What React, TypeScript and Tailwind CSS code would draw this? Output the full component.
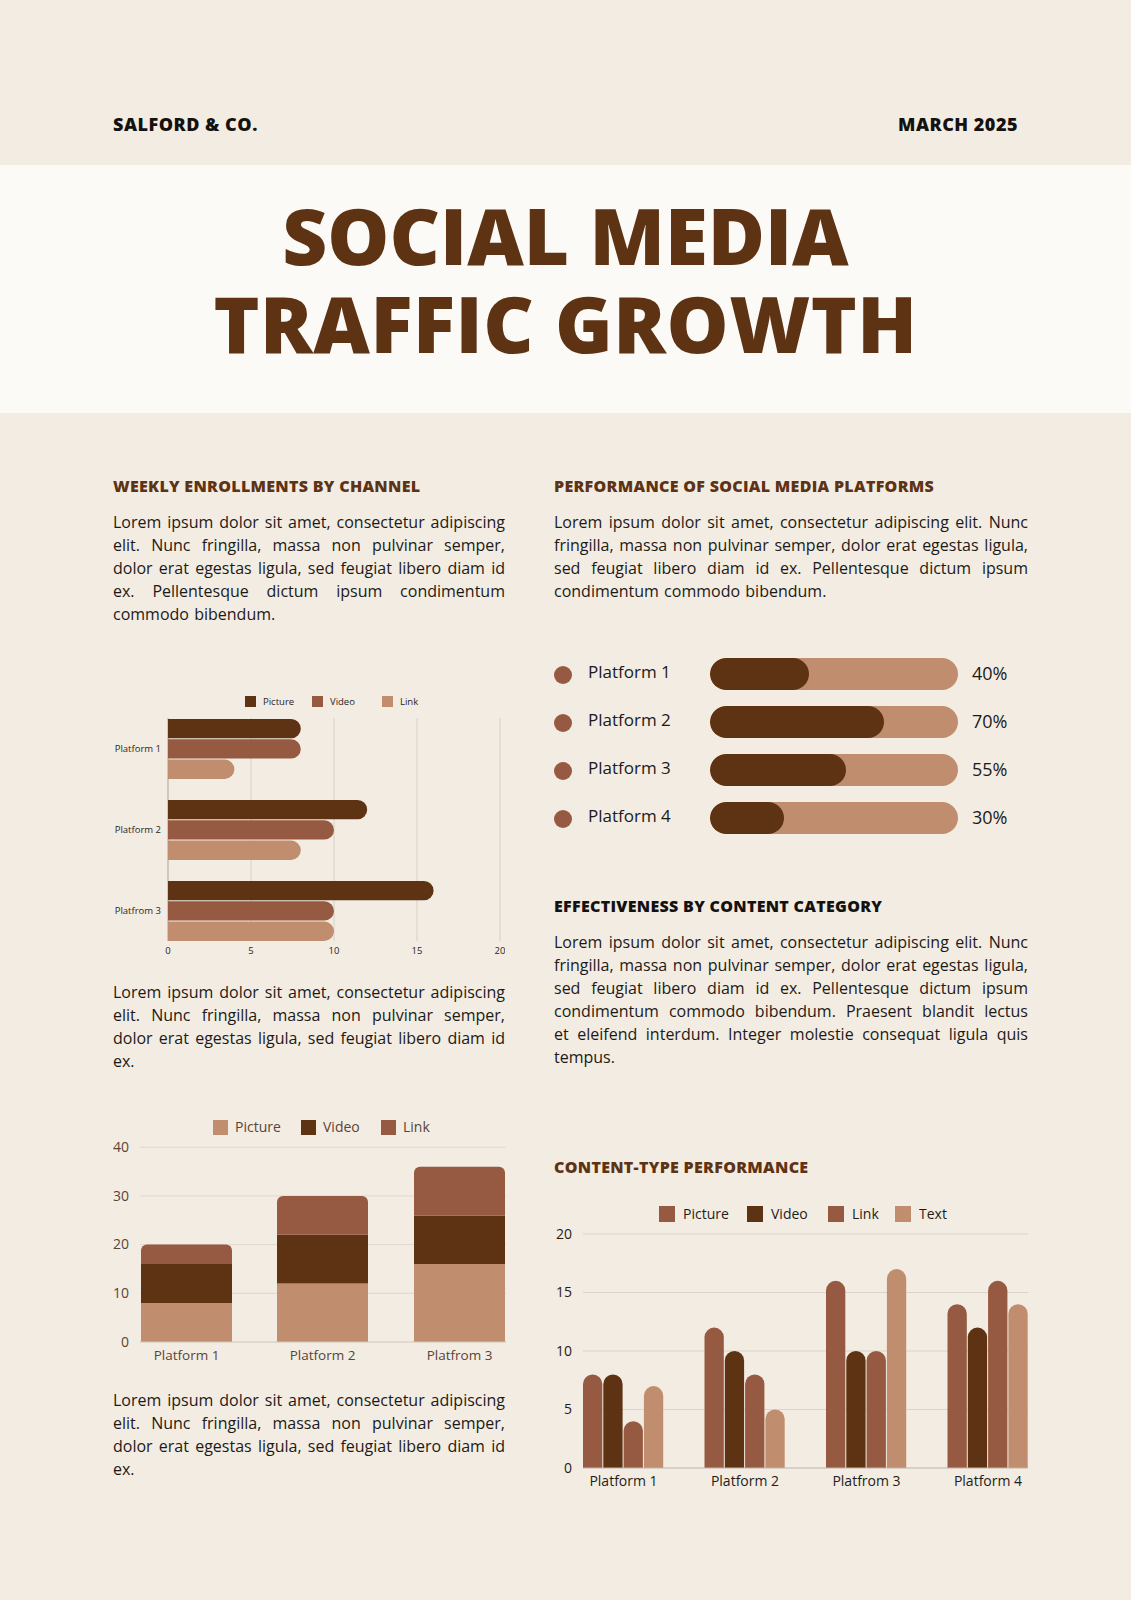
import React from "react";

const DARK = "#5e3314";
const MED = "#955a41";
const LIGHT = "#c08e6f";

const LOREM_A =
  "Lorem ipsum dolor sit amet, consectetur adipiscing elit. Nunc fringilla, massa non pulvinar semper, dolor erat egestas ligula, sed feugiat libero diam id ex. Pellentesque dictum ipsum condimentum commodo bibendum.";
const LOREM_B =
  "Lorem ipsum dolor sit amet, consectetur adipiscing elit. Nunc fringilla, massa non pulvinar semper, dolor erat egestas ligula, sed feugiat libero diam id ex.";
const LOREM_C =
  "Lorem ipsum dolor sit amet, consectetur adipiscing elit. Nunc fringilla, massa non pulvinar semper, dolor erat egestas ligula, sed feugiat libero diam id ex. Pellentesque dictum ipsum condimentum commodo bibendum. Praesent blandit lectus et\u00a0eleifend interdum. Integer molestie consequat ligula quis tempus.";

function Para({ children, className = "" }: { children: React.ReactNode; className?: string }) {
  return (
    <p className={`text-[16px] leading-[23px] [word-spacing:1.1px] text-[#1c1a18] text-justify ${className}`}>
      {children}
    </p>
  );
}

function HChart() {
  const data = [
    { label: "Platform 1", v: [8, 8, 4] },
    { label: "Platform 2", v: [12, 10, 8] },
    { label: "Platfrom 3", v: [16, 10, 10] },
  ];
  const colors = [DARK, MED, LIGHT];
  const x0 = 55;
  const unit = 16.6;
  const h = 19.3;
  const r = h / 2;
  return (
    <svg width={392} height={270} className="block">
      {[
        { c: DARK, t: "Picture", x: 132 },
        { c: MED, t: "Video", x: 199 },
        { c: LIGHT, t: "Link", x: 269 },
      ].map((l) => (
        <g key={l.t}>
          <rect x={l.x} y={6} width={11} height={11} fill={l.c} />
          <text x={l.x + 18} y={12} fontSize={9.5} fill="#2a2622" dominantBaseline="middle">
            {l.t}
          </text>
        </g>
      ))}
      {[1, 2, 3, 4].map((k) => (
        <line key={k} x1={x0 + 83 * k} x2={x0 + 83 * k} y1={28} y2={251} stroke="#d8d0c6" strokeWidth={1} />
      ))}
      <line x1={x0} x2={x0} y1={28} y2={251} stroke="#aaa39b" strokeWidth={1} />
      {data.map((d, g) => {
        const top = 29 + g * 81;
        return (
          <g key={d.label}>
            {d.v.map((v, i) => {
              const y = top + i * 20.3;
              const x1 = x0 + v * unit;
              return (
                <path
                  key={i}
                  d={`M${x0},${y} H${x1 - r} A${r},${r} 0 0 1 ${x1 - r},${y + h} H${x0} Z`}
                  fill={colors[i]}
                />
              );
            })}
            <text x={48} y={top + 30} fontSize={9.5} fill="#2a2622" textAnchor="end" dominantBaseline="middle">
              {d.label}
            </text>
          </g>
        );
      })}
      {[0, 5, 10, 15, 20].map((v, k) => (
        <text key={v} x={x0 + 83 * k} y={261} fontSize={9.5} fill="#2a2622" textAnchor="middle" dominantBaseline="middle">
          {v}
        </text>
      ))}
    </svg>
  );
}

function StackedChart() {
  const data = [
    { label: "Platform 1", v: [8, 8, 4], x: 28 },
    { label: "Platform 2", v: [12, 10, 8], x: 164 },
    { label: "Platfrom 3", v: [16, 10, 10], x: 301 },
  ];
  const colors = [LIGHT, DARK, MED];
  const base = 228;
  const unit = 4.87;
  const w = 91;
  const rr = 6;
  const txt = "#5a4535";
  return (
    <svg width={397} height={255} className="block">
      {[
        { c: LIGHT, t: "Picture", x: 100 },
        { c: DARK, t: "Video", x: 188 },
        { c: MED, t: "Link", x: 268 },
      ].map((l) => (
        <g key={l.t}>
          <rect x={l.x} y={6} width={15} height={15} fill={l.c} />
          <text x={l.x + 22} y={14} fontSize={14} fill={txt} dominantBaseline="middle">
            {l.t}
          </text>
        </g>
      ))}
      {[10, 20, 30, 40].map((v) => (
        <line key={v} x1={27} x2={393} y1={base - v * unit} y2={base - v * unit} stroke="#e0d8cc" strokeWidth={1} />
      ))}
      {[0, 10, 20, 30, 40].map((v) => (
        <text key={v} x={16} y={base - v * unit + 1} fontSize={14} fill={txt} textAnchor="end" dominantBaseline="middle">
          {v}
        </text>
      ))}
      {data.map((d) => {
        let acc = 0;
        return (
          <g key={d.label}>
            {d.v.map((v, i) => {
              const yb = base - acc * unit;
              acc += v;
              const yt = base - acc * unit;
              const last = i === d.v.length - 1;
              const p = last
                ? `M${d.x},${yb} V${yt + rr} A${rr},${rr} 0 0 1 ${d.x + rr},${yt} H${d.x + w - rr} A${rr},${rr} 0 0 1 ${d.x + w},${yt + rr} V${yb} Z`
                : `M${d.x},${yb} V${yt} H${d.x + w} V${yb} Z`;
              return <path key={i} d={p} fill={colors[i]} />;
            })}
            <text x={d.x + w / 2} y={242} fontSize={13.5} fill={txt} textAnchor="middle" dominantBaseline="middle">
              {d.label}
            </text>
          </g>
        );
      })}
      <line x1={27} x2={393} y1={base} y2={base} stroke="#cfc6ba" strokeWidth={1} />
    </svg>
  );
}

function GroupedChart() {
  const data = [
    { label: "Platform 1", v: [8, 8, 4, 7] },
    { label: "Platform 2", v: [12, 10, 8, 5] },
    { label: "Platfrom 3", v: [16, 10, 10, 17] },
    { label: "Platform 4", v: [14, 12, 16, 14] },
  ];
  const colors = [MED, DARK, MED, LIGHT];
  const base = 273;
  const unit = 11.7;
  const w = 19.3;
  const r = w / 2;
  const txt = "#1f1c1a";
  return (
    <svg width={476} height={300} className="block">
      {[
        { c: MED, t: "Picture", x: 105 },
        { c: DARK, t: "Video", x: 193 },
        { c: MED, t: "Link", x: 274 },
        { c: LIGHT, t: "Text", x: 341 },
      ].map((l) => (
        <g key={l.t}>
          <rect x={l.x} y={11} width={16} height={16} fill={l.c} />
          <text x={l.x + 24} y={20} fontSize={14} fill={txt} dominantBaseline="middle">
            {l.t}
          </text>
        </g>
      ))}
      {[5, 10, 15, 20].map((v) => (
        <line key={v} x1={29} x2={474} y1={base - v * unit} y2={base - v * unit} stroke="#dcd4c8" strokeWidth={1} />
      ))}
      {[0, 5, 10, 15, 20].map((v) => (
        <text key={v} x={18} y={base - v * unit + 1} fontSize={14} fill={txt} textAnchor="end" dominantBaseline="middle">
          {v}
        </text>
      ))}
      {data.map((d, g) => {
        const gx = 29 + g * 121.5;
        return (
          <g key={d.label}>
            {d.v.map((v, i) => {
              const x = gx + i * 20.3;
              const top = base - v * unit;
              return (
                <path
                  key={i}
                  d={`M${x},${base} V${top + r} A${r},${r} 0 0 1 ${x + w},${top + r} V${base} Z`}
                  fill={colors[i]}
                />
              );
            })}
            <text x={gx + 40.5} y={287} fontSize={14} fill={txt} textAnchor="middle" dominantBaseline="middle">
              {d.label}
            </text>
          </g>
        );
      })}
      <line x1={29} x2={474} y1={base} y2={base} stroke="#bdb4a9" strokeWidth={1} />
    </svg>
  );
}

function ProgressRow({ label, pct }: { label: string; pct: number }) {
  return (
    <div className="flex items-center h-[32px]">
      <div className="w-[18px] h-[18px] rounded-full bg-[#955a41] mr-[16px] mt-[2px]" />
      <div className="w-[122px] text-[17px] text-[#1c1a18] -mt-[4px]">{label}</div>
      <div className="w-[248px] h-[32px] rounded-full bg-[#c08e6f] overflow-hidden">
        <div className="h-full rounded-full bg-[#5e3314]" style={{ width: `${pct}%` }} />
      </div>
      <div className="ml-[14px] text-[18px] text-[#1c1a18] -mt-[2px]">{pct}%</div>
    </div>
  );
}

export default function App() {
  return (
    <div className="w-[1131px] min-h-[1600px] bg-[#f3ece2] font-['Open_Sans',sans-serif]">
      <header className="h-[165px] px-[113px] pt-[112px] flex justify-between items-start">
        <div className="text-[18px] leading-[24px] font-extrabold tracking-[0.5px] text-[#141210]">SALFORD &amp; CO.</div>
        <div className="text-[18px] leading-[24px] font-extrabold tracking-[0.5px] text-[#141210]">MARCH 2025</div>
      </header>
      <section className="h-[248px] bg-[#fbfaf7] flex flex-col items-center pt-[26px]">
        <h1 className="text-[78px] leading-[88px] font-extrabold text-[#5e3314] text-center">
          <span className="block">SOCIAL MEDIA</span>
          <span className="block tracking-[0.5px]">TRAFFIC GROWTH</span>
        </h1>
      </section>
      <main className="flex pl-[113px] pt-[63px] pb-[80px] gap-[49px]">
        <div className="w-[392px] flex flex-col">
          <h2 className="text-[16px] leading-[20px] font-extrabold tracking-[0.3px] text-[#5e3314]">WEEKLY ENROLLMENTS BY CHANNEL</h2>
          <Para className="mt-[15px]">{LOREM_A}</Para>
          <div className="mt-[64px]">
            <HChart />
          </div>
          <Para className="mt-[21px]">{LOREM_B}</Para>
          <div className="mt-[41px]">
            <StackedChart />
          </div>
          <Para className="mt-[20px]">{LOREM_B}</Para>
        </div>
        <div className="w-[474px] flex flex-col">
          <h2 className="text-[16px] leading-[20px] font-extrabold tracking-[0.3px] text-[#5e3314]">PERFORMANCE OF SOCIAL MEDIA PLATFORMS</h2>
          <Para className="mt-[15px]">{LOREM_A}</Para>
          <div className="mt-[55px] flex flex-col gap-[16px]">
            <ProgressRow label="Platform 1" pct={40} />
            <ProgressRow label="Platform 2" pct={70} />
            <ProgressRow label="Platform 3" pct={55} />
            <ProgressRow label="Platform 4" pct={30} />
          </div>
          <h2 className="mt-[62px] text-[16px] leading-[20px] font-extrabold tracking-[0.3px] text-[#141210]">EFFECTIVENESS BY CONTENT CATEGORY</h2>
          <Para className="mt-[15px]">{LOREM_C}</Para>
          <h2 className="mt-[88px] text-[16px] leading-[20px] font-extrabold tracking-[0.3px] text-[#5e3314]">CONTENT-TYPE PERFORMANCE</h2>
          <div className="mt-[18px]">
            <GroupedChart />
          </div>
        </div>
      </main>
    </div>
  );
}
